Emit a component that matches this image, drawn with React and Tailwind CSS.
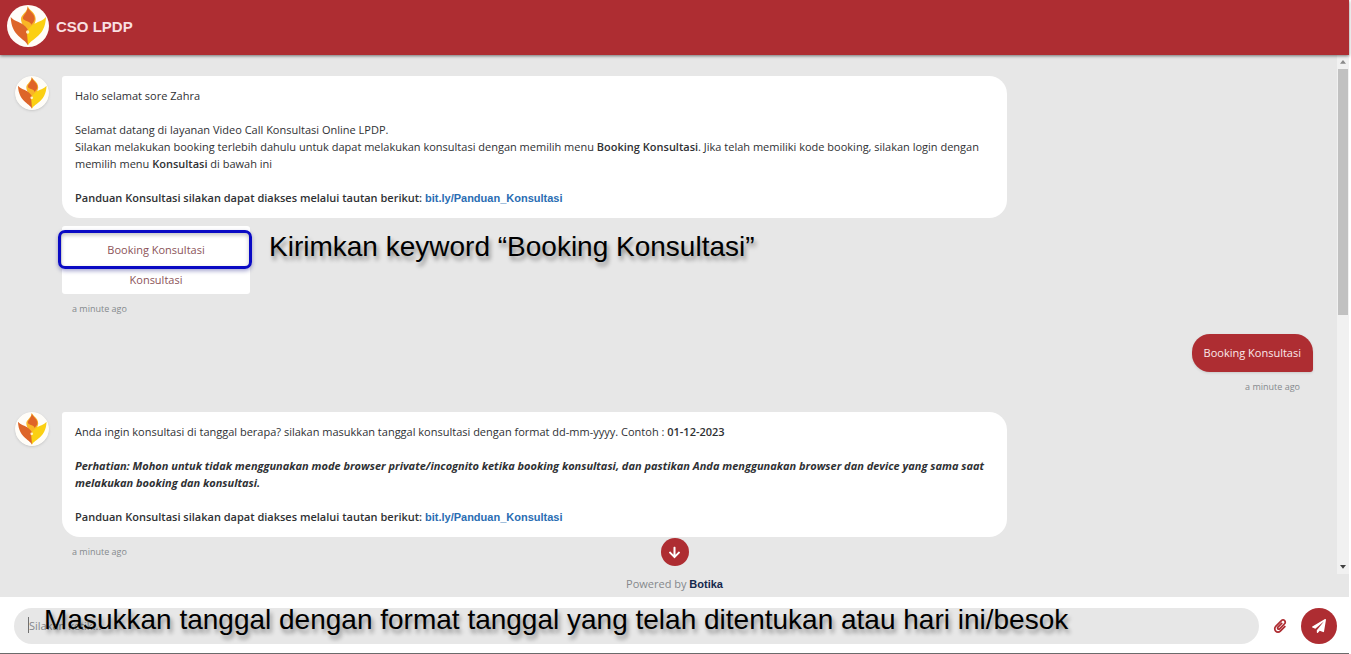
import React, { useState } from "react";
import { FaArrowDown, FaPaperPlane, FaPaperclip } from "react-icons/fa";

const Logo = ({ className }) => (
  <svg viewBox="0 0 126 126" className={className} aria-hidden="true">
    <circle cx="63" cy="63" r="63" fill="#fffdf8" />
    {/* flame */}
    <path d="M62 3C66 16 86 22 86 42C86 56 76 64 74 84L56 80C54 64 42 58 42 42C42 28 62 22 62 3Z" fill="#f9b526" />
    <path d="M62 6C67 20 84 26 83 42C82 50 77 54 73 59C70 49 56 50 48 42C46 30 62 24 62 6Z" fill="#df6428" />
    {/* wings */}
    <path d="M11 36C20 48 38 50 50 60C59 67 64 75 66 84L63 121C52 98 14 96 11 36Z" fill="#dd6529" />
    <path d="M117 36C108 48 90 50 77 60C68 67 62 74 60 84L63 121C76 98 114 96 117 36Z" fill="#fbd012" />
    <circle cx="62" cy="81" r="5" fill="#fff3c4" />
  </svg>
);

const GuideLink = () => (
  <p className="font-semibold">
    Panduan Konsultasi silakan dapat diakses melalui tautan berikut:{" "}
    <a href="#panduan" className="font-['Liberation_Sans',sans-serif] font-bold text-[#2a6db3]">
      bit.ly/Panduan_Konsultasi
    </a>
  </p>
);

const Time = () => (
  <p className="mt-2 px-[10px] text-[9px] leading-[14px] text-[#85898d]">a minute ago</p>
);

const BotMessage = ({ children, options }) => (
  <div className="flex items-start gap-[13px]">
    <Logo className="size-[34px] shrink-0 rounded-full shadow-sm" />
    <div className="min-w-0">
      <div className="max-w-[945px] space-y-[17px] rounded-[18px] rounded-tl-[3px] bg-white px-[13px] py-[11px]">
        {children}
      </div>
      {options}
      <Time />
    </div>
  </div>
);

const ScrollBar = () => (
  <div className="flex w-3 shrink-0 flex-col items-center bg-[#f1f1f1]" aria-hidden="true">
    <div className="flex h-[14px] items-center">
      <svg viewBox="0 0 8 5" className="w-[6px]"><path d="M4 0L8 5H0Z" fill="#8a8a8a" /></svg>
    </div>
    <div className="flex w-full flex-1 flex-col px-px">
      <div className="h-1/2 bg-[#c1c1c1]" />
    </div>
    <div className="flex h-[14px] items-center">
      <svg viewBox="0 0 8 5" className="w-[6px]"><path d="M4 5L8 0H0Z" fill="#404040" /></svg>
    </div>
  </div>
);

const App = () => {
  const [text, setText] = useState("");

  const options = (
    <div className="relative mt-2 w-[188px]">
      <div className="flex flex-col rounded-[3px] bg-white pt-2 text-[#8b5358]">
        <button type="button" className="h-[30px]">Booking Konsultasi</button>
        <button type="button" className="h-[30px]">Konsultasi</button>
      </div>
      {/* highlight + note over the chat */}
      <div className="pointer-events-none absolute -left-1 -right-0.5 top-1 h-[39px] rounded-[7px] border-[3px] border-[#0a0ac4] shadow-[0_2px_4px_rgba(0,0,120,0.35),inset_0_2px_4px_rgba(0,0,0,0.25)]" />
      <p className="absolute left-[207px] top-[5px] whitespace-nowrap font-['Liberation_Sans',sans-serif] text-[28px] leading-8 text-black [text-shadow:2px_4px_4px_rgba(0,0,0,0.4)]">
        Kirimkan keyword “Booking Konsultasi”
      </p>
    </div>
  );

  return (
    <div className="flex h-screen flex-col overflow-hidden bg-white pr-[2px] font-['Open_Sans',sans-serif] text-[11px] leading-[17px] text-[#2f3134]">
      <header className="relative z-10 flex h-[55px] shrink-0 items-center gap-[7px] bg-[#ae2d32] px-[7px] pb-[3px] shadow-[0_1px_3px_rgba(0,0,0,0.5)]">
        <Logo className="size-[42px]" />
        <h1 className="font-['Liberation_Sans',sans-serif] text-[15px] font-bold text-[#f8dfe0]">CSO LPDP</h1>
      </header>

      <main className="relative flex min-h-0 flex-1 flex-col bg-[#e7e7e7]">
        <div className="flex min-h-0 flex-1">
          <div className="flex min-w-0 flex-1 flex-col gap-[18px] overflow-hidden pl-[15px] pr-6 pt-[21px]">
            <BotMessage options={options}>
              <p>Halo selamat sore Zahra</p>
              <p>
                Selamat datang di layanan Video Call Konsultasi Online LPDP.
                <br />
                Silakan melakukan booking terlebih dahulu untuk dapat melakukan konsultasi dengan memilih menu{" "}
                <b className="font-semibold">Booking Konsultasi</b>. Jika telah memiliki kode booking, silakan login
                dengan memilih menu <b className="font-semibold">Konsultasi</b> di bawah ini
              </p>
              <GuideLink />
            </BotMessage>

            <div className="flex flex-col items-end">
              <p className="rounded-[18px] rounded-br-[3px] bg-[#ae2d32] px-3 py-[10px] leading-[18px] text-[#fbe9ea] shadow-sm">
                Booking Konsultasi
              </p>
              <div className="pr-[3px]">
                <Time />
              </div>
            </div>

            <BotMessage>
              <p>
                Anda ingin konsultasi di tanggal berapa? silakan masukkan tanggal konsultasi dengan format dd-mm-yyyy.
                Contoh : <b className="font-semibold">01-12-2023</b>
              </p>
              <p className="font-bold italic">
                Perhatian: Mohon untuk tidak menggunakan mode browser private/incognito ketika booking konsultasi, dan
                pastikan Anda menggunakan browser dan device yang sama saat melakukan booking dan konsultasi.
              </p>
              <GuideLink />
            </BotMessage>
          </div>
          <ScrollBar />
        </div>

        <p className="h-[23px] text-center leading-5 text-[#85888c]">
          Powered by{" "}
          <a href="#botika" className="font-['Liberation_Sans',sans-serif] font-bold text-[#15294d]">Botika</a>
        </p>
        <button
          type="button"
          aria-label="Ke bawah"
          className="absolute bottom-[31px] left-1/2 flex size-7 -translate-x-1/2 items-center justify-center rounded-full bg-[#ae2d32] text-white"
        >
          <FaArrowDown className="size-[13px]" />
        </button>
      </main>

      <form
        onSubmit={(e) => e.preventDefault()}
        className="relative flex h-[57px] shrink-0 items-center border-b border-[#6b6b6b] pl-[14px] pr-3 pt-px"
      >
        <input
          type="text"
          aria-label="Pesan"
          placeholder="Silakan ketik..."
          value={text}
          onChange={(e) => setText(e.target.value)}
          className="h-9 min-w-0 flex-1 rounded-full bg-[#e7e7e7] px-[15px] placeholder:text-[#85888c] focus:outline-none"
        />
        <span className="absolute left-7 top-5 h-4 w-px bg-[#707070]" />
        <button type="button" aria-label="Lampirkan" className="flex w-[42px] justify-center text-[#ae2d32]">
          <FaPaperclip className="size-[14px]" />
        </button>
        <button
          type="submit"
          aria-label="Kirim"
          className="flex size-9 items-center justify-center rounded-full bg-[#ae2d32] text-white"
        >
          <FaPaperPlane className="size-[14px]" />
        </button>
        <p className="pointer-events-none absolute left-11 top-[7px] whitespace-nowrap font-['Liberation_Sans',sans-serif] text-[28px] leading-8 text-black [text-shadow:2px_4px_4px_rgba(0,0,0,0.4)]">
          Masukkan tanggal dengan format tanggal yang telah ditentukan atau hari ini/besok
        </p>
      </form>
    </div>
  );
};

export default App;
